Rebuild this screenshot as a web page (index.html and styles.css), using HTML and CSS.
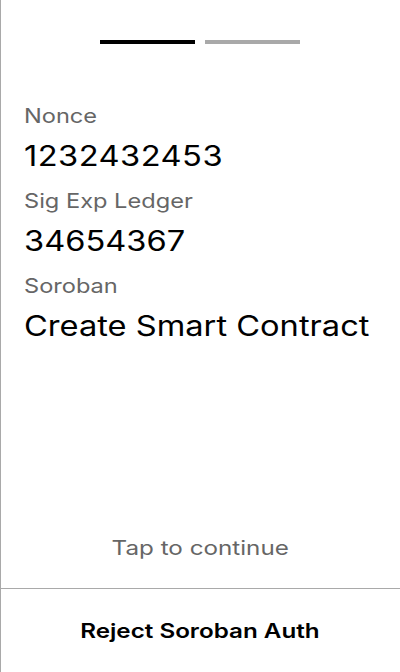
FILE: index.html
```html
<!DOCTYPE html>
<html>
<head>
<meta charset="utf-8">
<link rel="stylesheet" href="styles.css">
</head>
<body>
<div class="screen">
  <div class="progress">
    <span class="bar bar-active"></span>
    <span class="bar bar-idle"></span>
  </div>
  <div class="fields">
    <div class="label"><span class="wide">Nonce</span></div>
    <div class="value"><span class="wide num">1232432453</span></div>
    <div class="label"><span class="wide">Sig Exp Ledger</span></div>
    <div class="value"><span class="wide">34654367</span></div>
    <div class="label"><span class="wide">Soroban</span></div>
    <div class="value"><span class="wide">Create Smart Contract</span></div>
  </div>
  <div class="hint"><span class="wide-c">Tap to continue</span></div>
  <div class="footer"><span class="wide-c">Reject Soroban Auth</span></div>
</div>
</body>
</html>
```
FILE: styles.css
```css
html, body {
  margin: 0;
  padding: 0;
  background: #fff;
}
body {
  font-family: Inter, "Noto Sans", sans-serif;
}
.screen {
  box-sizing: border-box;
  width: 400px;
  height: 672px;
  border-left: 1px solid #a9a9a9;
  display: flex;
  flex-direction: column;
}
.progress {
  display: flex;
  justify-content: center;
  gap: 10px;
  padding-top: 40px;
  margin-left: -1px;
}
.bar {
  display: block;
  width: 95px;
  height: 4px;
}
.bar-active { background: #000; }
.bar-idle { background: #a9a9a9; }
.fields {
  padding-left: 23px;
  padding-top: 60px;
  display: flex;
  flex-direction: column;
}
.wide {
  display: inline-block;
  transform: scaleX(1.165);
  transform-origin: left center;
}
.wide.num {
  letter-spacing: 0.4px;
}
.wide-c {
  display: inline-block;
  transform: scaleX(1.21);
  transform-origin: center center;
}
.label {
  font-size: 20px;
  line-height: 24px;
  color: #666;
}
.label .wide {
  transform: scaleX(1.18);
}
.value {
  font-size: 28px;
  line-height: 34px;
  color: #000;
  margin-top: 11px;
  margin-bottom: 16px;
}
.hint {
  margin-top: auto;
  text-align: center;
  font-size: 20px;
  line-height: 24px;
  color: #666;
  padding-bottom: 28px;
  margin-left: -1px;
}
.footer {
  border-top: 1px solid #a9a9a9;
  margin-left: -1px;
  height: 83px;
  display: flex;
  align-items: center;
  justify-content: center;
  font-size: 20px;
  font-weight: 600;
  color: #000;
}
```
